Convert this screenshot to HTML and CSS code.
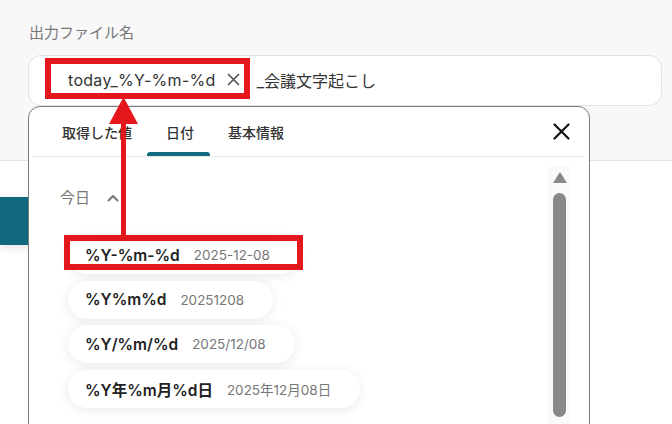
FILE: index.html
```html
<!DOCTYPE html>
<html lang="ja">
<head>
<meta charset="utf-8">
<link rel="stylesheet" href="styles.css">
</head>
<body>
<section class="panel">
  <div class="label">出力ファイル名</div>
  <div class="input">
    <span class="token">today_%Y-%m-%d</span>
    <svg class="token-x" width="13" height="13" viewBox="0 0 13 13"><path d="M1.5 1.5 L11.5 11.5 M11.5 1.5 L1.5 11.5" stroke="#555" stroke-width="1.7" stroke-linecap="round"/></svg>
    <span class="rest">_会議文字起こし</span>
  </div>
</section>
<div class="below">
  <div class="teal-btn"></div>
</div>

<div class="popup">
  <div class="tabs">
    <div class="tab">取得した値</div>
    <div class="tab active">日付</div>
    <div class="tab">基本情報</div>
    <svg class="close" width="17" height="17" viewBox="0 0 17 17"><path d="M1.5 1.5 L15.5 15.5 M15.5 1.5 L1.5 15.5" stroke="#111" stroke-width="2.2" stroke-linecap="round"/></svg>
  </div>
  <div class="body">
    <div class="list">
      <div class="section-head">
        <span>今日</span>
        <svg class="chev" width="12" height="8" viewBox="0 0 12 8"><path d="M1.5 6.5 L6 2 L10.5 6.5" fill="none" stroke="#777" stroke-width="2" stroke-linecap="round" stroke-linejoin="round"/></svg>
      </div>
      <div class="chips">
        <div class="chip"><b>%Y-%m-%d</b><span>2025-12-08</span></div>
        <div class="chip"><b>%Y%m%d</b><span>20251208</span></div>
        <div class="chip"><b>%Y/%m/%d</b><span>2025/12/08</span></div>
        <div class="chip"><b>%Y年%m月%d日</b><span>2025年12月08日</span></div>
      </div>
    </div>
    <div class="scroll">
      <div class="scroll-up"></div>
      <div class="thumb"></div>
    </div>
  </div>
</div>

<div class="redbox box-top"></div>
<div class="redbox box-chip"></div>
<svg class="arrow" width="40" height="145" viewBox="0 0 40 145">
  <polygon points="19.5,1 5,28 34,28" fill="#e4181c"/>
  <rect x="17" y="24" width="5" height="118" fill="#e4181c"/>
</svg>
</body>
</html>
```

FILE: styles.css
```css
html, body {
  margin: 0;
  padding: 0;
  width: 672px;
  height: 424px;
  overflow: hidden;
  background: #ffffff;
  font-family: "Inter", "Noto Sans CJK JP", sans-serif;
}

.panel {
  box-sizing: border-box;
  height: 161px;
  background: #f8f8f9;
  border-bottom: 1px solid #e3e3e6;
  padding: 22px 10px 0 28px;
}

.label {
  font-size: 15px;
  line-height: 22px;
  color: #777;
  margin-left: 1px;
  margin-bottom: 11px;
}

.input {
  box-sizing: border-box;
  height: 51px;
  background: #fff;
  border: 1px solid #e2e2e8;
  border-radius: 13px;
  display: flex;
  align-items: center;
  padding-left: 39px;
  padding-bottom: 2px;
}

.token {
  font-size: 16px;
  color: #333;
  letter-spacing: 0.3px;
}

.token-x {
  margin-left: 11px;
}

.rest {
  margin-left: 17px;
  font-size: 16px;
  color: #333;
}

.below {
  padding-top: 36px;
}

.teal-btn {
  width: 180px;
  height: 48px;
  background: #10697f;
  border-radius: 0 8px 8px 0;
  box-shadow: 0 2px 10px rgba(0,0,0,0.12);
}

.popup {
  position: absolute;
  left: 28px;
  top: 106px;
  width: 562px;
  height: 340px;
  box-sizing: border-box;
  background: #fff;
  border: 1px solid #7a7a7a;
  border-radius: 12px;
}

.tabs {
  display: flex;
  align-items: stretch;
  height: 49px;
  margin: 0 4px;
  padding-left: 12px;
  border-bottom: 1px solid #e6e6e6;
}

.tab {
  position: relative;
  display: flex;
  align-items: center;
  padding: 0 17px;
  font-size: 14px;
  font-weight: 500;
  color: #333;
}

.tab.active::after {
  content: "";
  position: absolute;
  left: -2px;
  right: 1px;
  bottom: 0;
  height: 4px;
  background: #136b80;
  border-radius: 3px 3px 0 0;
}

.close {
  margin-left: auto;
  margin-right: 15px;
  align-self: center;
}

.body {
  display: flex;
}

.list {
  flex: 1;
  padding: 30px 0 0 31px;
}

.section-head {
  display: flex;
  align-items: center;
  font-size: 15px;
  line-height: 22px;
  color: #777;
}

.chev {
  margin-left: 17px;
}

.chips {
  margin-top: 27px;
  margin-left: 8px;
  display: flex;
  flex-direction: column;
  align-items: flex-start;
  gap: 6.5px;
}

.chip {
  height: 38px;
  display: flex;
  align-items: center;
  padding: 0 29px 0 17px;
  border-radius: 19px;
  background: #fff;
  box-shadow: 0 2px 12px rgba(0,0,0,0.09);
}

.chip b {
  font-size: 15.5px;
  font-weight: 600;
  color: #222;
}

.chip span {
  margin-left: 14px;
  font-size: 13.5px;
  color: #777;
}

.scroll {
  width: 23px;
  margin: 9px 18px 0 0;
  height: 270px;
  background: #fafafa;
  display: flex;
  flex-direction: column;
  align-items: center;
}

.scroll-up {
  margin-top: 6px;
  width: 0;
  height: 0;
  border-left: 7px solid transparent;
  border-right: 7px solid transparent;
  border-bottom: 11px solid #888;
}

.thumb {
  margin-top: 10px;
  width: 13px;
  height: 224px;
  background: #888;
  border-radius: 7px;
}

.redbox {
  position: absolute;
  box-sizing: border-box;
  border: 6px solid #e4181c;
}

.box-top {
  left: 45px;
  top: 58px;
  width: 205px;
  height: 41px;
}

.box-chip {
  left: 64px;
  top: 235px;
  width: 239px;
  height: 35px;
}

.arrow {
  position: absolute;
  left: 104px;
  top: 96px;
}
```
